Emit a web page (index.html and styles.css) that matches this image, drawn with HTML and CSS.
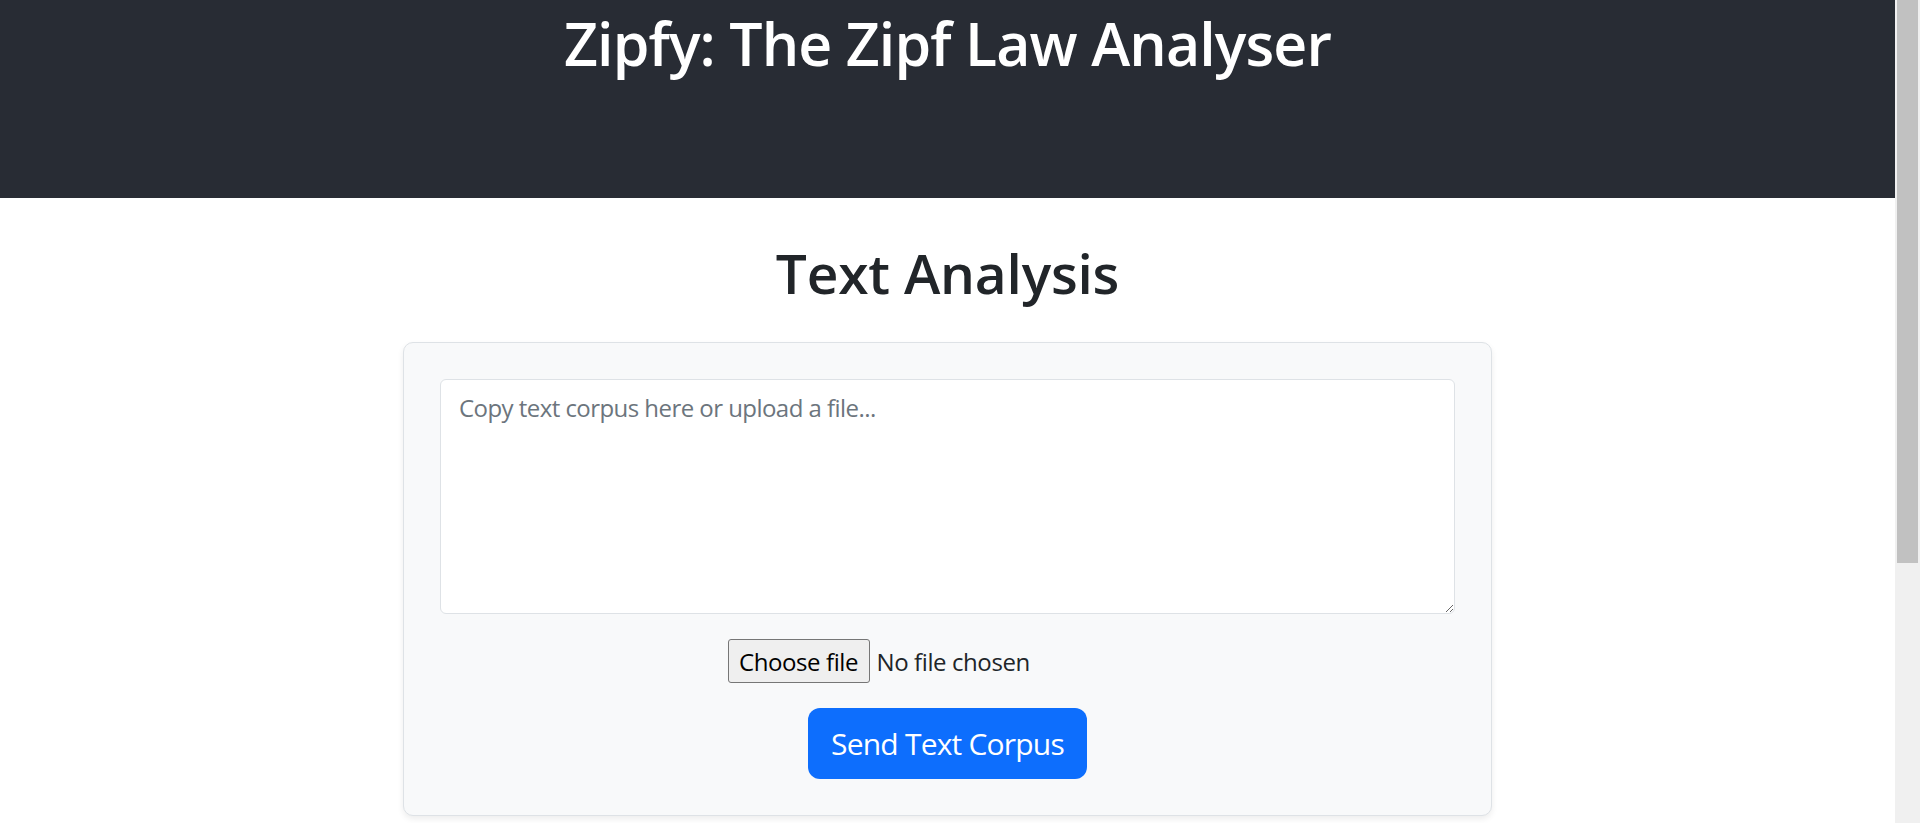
FILE: index.html
```html
<!DOCTYPE html>
<html lang="en">
<head>
<meta charset="utf-8">
<title>Zipfy: The Zipf Law Analyser</title>
<link rel="stylesheet" href="styles.css">
</head>
<body>
<div class="page">
  <div class="app">
    <header class="app-header">
      <h1 class="app-title">Zipfy: The Zipf Law Analyser</h1>
    </header>
    <main class="main">
      <h1 class="section-title">Text Analysis</h1>
      <form class="card">
        <textarea class="corpus" placeholder="Copy text corpus here or upload a file..."></textarea>
        <label class="file-input">
          <span class="file-btn">Choose file</span>
          <span class="file-name">No file chosen</span>
        </label>
        <div class="actions">
          <button type="button" class="send-btn">Send Text Corpus</button>
        </div>
      </form>
    </main>
  </div>
  <div class="scrollbar"><div class="scrollbar-thumb"></div></div>
</div>
</body>
</html>
```
FILE: styles.css
```css
html, body {
  margin: 0;
  padding: 0;
  height: 100%;
  overflow: hidden;
}
body {
  font-family: "Open Sans", "Noto Sans", sans-serif;
  color: #212529;
  background: #fff;
}
.page {
  display: flex;
  height: 100vh;
}
.app {
  flex: 1;
  min-width: 0;
}
.app-header {
  background: #282c34;
  height: 198px;
  box-sizing: border-box;
  padding-top: 7px;
}
.app-title {
  margin: 0;
  text-align: center;
  color: #fff;
  font-size: 59px;
  font-weight: 600;
  letter-spacing: -0.9px;
  line-height: 72px;
}
.main {
  display: flex;
  flex-direction: column;
  align-items: center;
}
.section-title {
  margin: 42px 0 36px;
  font-size: 55px;
  font-weight: 600;
  letter-spacing: -0.2px;
  line-height: 1.2;
  color: #212529;
}
.card {
  width: 1089px;
  box-sizing: border-box;
  padding: 36px;
  background: #f8f9fa;
  border: 1px solid #dee2e6;
  border-radius: 10px;
  box-shadow: 0 3px 6px rgba(0, 0, 0, 0.075);
  display: flex;
  flex-direction: column;
  align-items: center;
}
.corpus {
  display: block;
  width: 100%;
  height: 235px;
  box-sizing: border-box;
  margin: 0;
  padding: 10px 18px 9px;
  font-family: inherit;
  font-size: 24px;
  letter-spacing: -0.55px;
  line-height: 1.5;
  color: #212529;
  background: #fff;
  border: 1px solid #dee2e6;
  border-radius: 6px;
  resize: vertical;
}
.corpus::placeholder {
  color: #6c757d;
  opacity: 1;
}
.file-input {
  margin-top: 25px;
  width: 440px;
  height: 44px;
  display: flex;
  align-items: center;
  font-size: 24px;
  letter-spacing: -0.4px;
}
.file-btn {
  width: 142px;
  height: 44px;
  box-sizing: border-box;
  display: flex;
  align-items: center;
  justify-content: center;
  background: #efefef;
  border: 1px solid #767676;
  border-radius: 3px;
  color: #000;
}
.file-name {
  margin-left: 7px;
  color: #212529;
}
.actions {
  margin-top: 25px;
}
.send-btn {
  height: 71px;
  padding: 0 23px;
  font-family: inherit;
  font-size: 30px;
  letter-spacing: -0.8px;
  line-height: 1;
  color: #fff;
  background: #0d6efd;
  border: none;
  border-radius: 12px;
}
.scrollbar {
  width: 25px;
  flex: none;
  background: #f0f0f0;
  box-sizing: border-box;
  padding: 0 2px 0 2px;
}
.scrollbar-thumb {
  height: 563px;
  background: #c1c1c1;
}
```
